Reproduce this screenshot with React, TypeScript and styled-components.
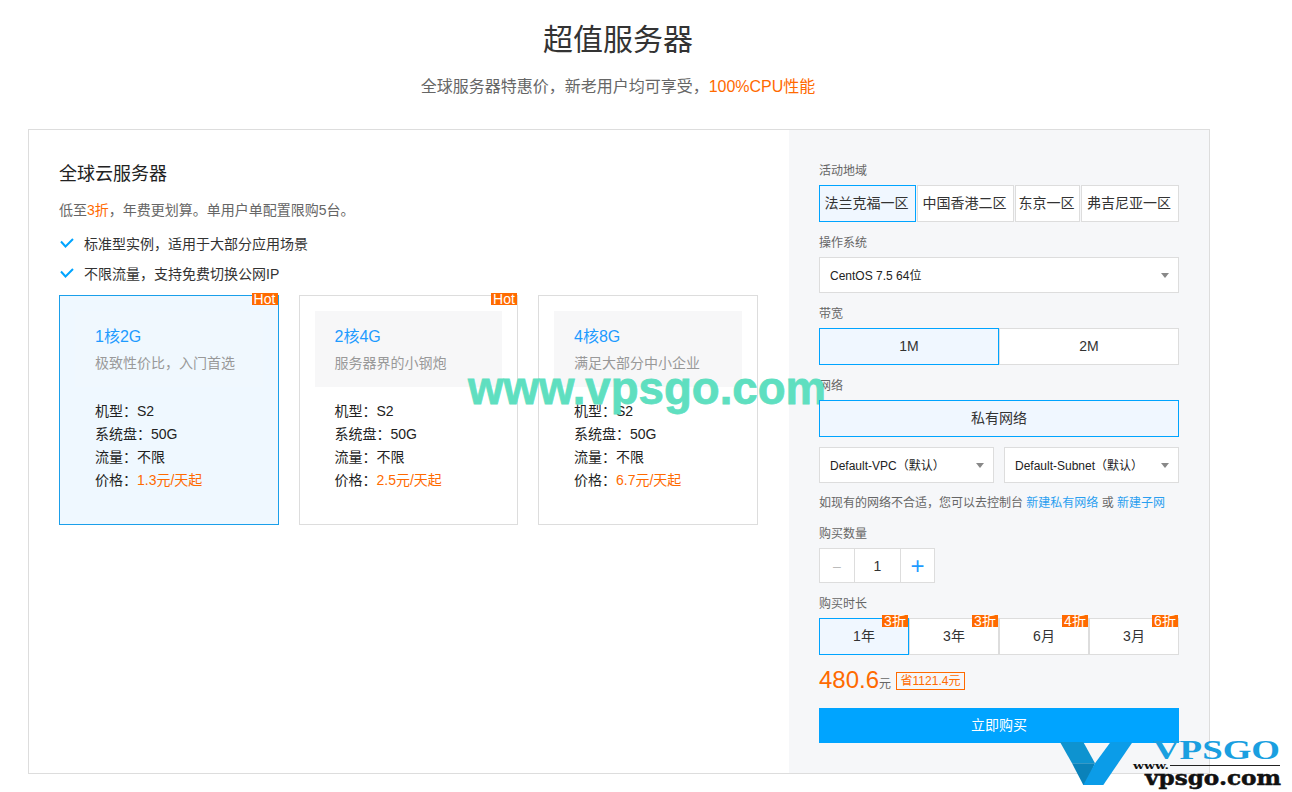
import React from 'react';
import styled, { createGlobalStyle } from 'styled-components';

const Global = createGlobalStyle`
  html, body { margin: 0; padding: 0; background: #fff; }
  body { font-family: "Liberation Sans", "Noto Sans CJK SC", sans-serif; color: #333; }
  * { box-sizing: border-box; }
`;

const Page = styled.div`
  position: relative;
  width: 1292px;
  height: 792px;
  overflow: hidden;
  padding-left: 28px;
`;
const Head = styled.header`
  width: 1180px;
  height: 129px;
  padding-top: 20px;
  text-align: center;
`;
const Title = styled.h1`
  margin: 0;
  font-size: 30px;
  line-height: 40px;
  font-weight: 400;
  color: #333;
`;
const Sub = styled.p`
  margin: 16px 0 0;
  font-size: 16px;
  line-height: 22px;
  color: #666;
`;
const Orange = styled.span`
  color: #ff6a00;
`;
const Panel = styled.section`
  width: 1182px;
  height: 645px;
  border: 1px solid #ddd;
  display: flex;
`;
const Left = styled.div`
  width: 760px;
  padding: 32px 0 0 30px;
`;
const PlanTitle = styled.h2`
  margin: 0;
  font-size: 18px;
  line-height: 24px;
  font-weight: 400;
  color: #222;
`;
const Desc = styled.p`
  margin: 14px 0 0;
  font-size: 14px;
  line-height: 20px;
  color: #666;
`;
const Features = styled.ul`
  list-style: none;
  margin: 8px 0 0;
  padding: 0;
`;
const Feature = styled.li`
  display: flex;
  align-items: center;
  gap: 9px;
  height: 30px;
  font-size: 14px;
  color: #333;
`;
const Cards = styled.div`
  display: flex;
  gap: 20px;
  margin-top: 7px;
`;
const Card = styled.article<{ $active?: boolean }>`
  position: relative;
  width: 219.5px;
  height: 230px;
  padding: 15px;
  border: 1px solid ${p => (p.$active ? '#1a9fea' : '#ddd')};
  background: ${p => (p.$active ? '#eff8ff' : '#fff')};
`;
const HotTag = styled.span`
  position: absolute;
  top: -3px;
  right: 0;
  width: 26px;
  height: 12px;
  background: #ff6a00;
  color: #fff;
  font-size: 14px;
  line-height: 12px;
  text-align: center;
`;
const CardInner = styled.div<{ $active?: boolean }>`
  height: 76px;
  padding: 15px 20px 0;
  background: ${p => (p.$active ? '#f0f8fe' : '#f7f7f8')};
`;
const CardName = styled.div`
  font-size: 16px;
  line-height: 22px;
  color: #1e9bff;
`;
const CardDesc = styled.div`
  margin-top: 5px;
  font-size: 14px;
  line-height: 20px;
  color: #999;
`;
const Specs = styled.div`
  margin-top: 13px;
  padding-left: 20px;
`;
const Spec = styled.div`
  font-size: 14px;
  line-height: 23px;
  color: #222;
`;
const Right = styled.aside`
  flex: 1;
  padding: 20px 30px 0 30px;
  background: #f6f7f9;
`;
const Label = styled.div`
  height: 35px;
  padding-top: 13px;
  font-size: 12px;
  line-height: 16px;
  color: #666;
`;
const Opt = styled.button<{ $active?: boolean }>`
  position: relative;
  display: block;
  height: 37px;
  padding: 0 0 3px;
  font: inherit;
  font-size: 14px;
  white-space: nowrap;
  color: #333;
  text-align: center;
  border: 1px solid ${p => (p.$active ? '#00a4ff' : '#ddd')};
  background: ${p => (p.$active ? '#f0f7ff' : '#fff')};
  z-index: ${p => (p.$active ? 1 : 0)};
`;
const RegionRow = styled.div`
  display: grid;
  grid-template-columns: 97px 97px 65px 98px;
  gap: 1px;
  ${Opt} {
    padding-right: 2px;
  }
`;
const TwoRow = styled.div`
  display: grid;
  grid-template-columns: 1fr 1fr;
  ${Opt} {
    padding-bottom: 1px;
  }
`;
const OneRow = styled.div`
  display: grid;
`;
const DurRow = styled.div`
  display: grid;
  grid-template-columns: repeat(4, 90px);
`;
const DiscountTag = styled.span`
  position: absolute;
  top: -4px;
  right: 0;
  width: 26px;
  height: 12px;
  background: #ff6a00;
  color: #fff;
  font-size: 14px;
  line-height: 12px;
  text-align: center;
`;
const SelectBox = styled.div`
  position: relative;
  height: 36px;
  padding-left: 10px;
  font-size: 12px;
  line-height: 36px;
  color: #222;
  background: #fff;
  border: 1px solid #ddd;
  &::after {
    content: '';
    position: absolute;
    right: 9px;
    top: 15px;
    border-left: 4px solid transparent;
    border-right: 4px solid transparent;
    border-top: 5px solid #888;
  }
`;
const NetSelects = styled.div`
  display: grid;
  grid-template-columns: 175px 175px;
  gap: 10px;
  margin-top: 10px;
`;
const Hint = styled.p`
  margin: 0;
  height: 30px;
  padding-top: 12px;
  font-size: 12px;
  line-height: 16px;
  color: #666;
  white-space: nowrap;
`;
const Link = styled.a`
  color: #2a9ff0;
`;
const Stepper = styled.div`
  display: grid;
  grid-template-columns: 34px 47px 33px;
  width: 116px;
  height: 35px;
  background: #fff;
  border: 1px solid #ddd;
`;
const StepCell = styled.span<{ $mid?: boolean; $color: string; $size: number }>`
  display: flex;
  align-items: center;
  justify-content: center;
  font-size: ${p => p.$size}px;
  color: ${p => p.$color};
  ${p => (p.$mid ? 'border-left: 1px solid #ddd; border-right: 1px solid #ddd;' : '')}
`;
const PriceRow = styled.div`
  display: flex;
  align-items: baseline;
  height: 53px;
  padding-top: 11px;
`;
const Price = styled.span`
  font-size: 24px;
  line-height: 28px;
  color: #ff6a00;
`;
const Unit = styled.span`
  font-size: 12px;
  color: #666;
`;
const Save = styled.span`
  align-self: flex-start;
  margin: 6px 0 0 5px;
  padding: 0 3.5px;
  height: 18px;
  line-height: 16px;
  font-size: 12px;
  color: #ff6a00;
  border: 1px solid #ff6a00;
`;
const Buy = styled.button`
  display: block;
  width: 360px;
  height: 35px;
  padding: 0 0 3px;
  border: 0;
  font: inherit;
  font-size: 14px;
  color: #fff;
  background: #00a4ff;
`;
const Watermark = styled.div`
  position: absolute;
  left: 468px;
  top: 363px;
  font-size: 45.6px;
  line-height: 52px;
  font-weight: 700;
  white-space: nowrap;
  color: #5fdfc0;
  -webkit-text-stroke: 0.8px #5fdfc0;
`;
const Logo = styled.svg`
  position: absolute;
  left: 1060px;
  top: 736px;
`;

const Check = () => (
  <svg width="16" height="16" viewBox="0 0 16 16" fill="none">
    <path d="M2 6.5L6.5 11.5L14 4" stroke="#00a4ff" strokeWidth="2" />
  </svg>
);

const plans = [
  { name: '1核2G', desc: '极致性价比，入门首选', price: '1.3元/天起', active: true, hot: true },
  { name: '2核4G', desc: '服务器界的小钢炮', price: '2.5元/天起', hot: true },
  { name: '4核8G', desc: '满足大部分中小企业', price: '6.7元/天起' },
];

export default function App() {
  return (
    <Page>
      <Global />
      <Head>
        <Title>超值服务器</Title>
        <Sub>全球服务器特惠价，新老用户均可享受，<Orange>100%CPU性能</Orange></Sub>
      </Head>
      <Panel>
        <Left>
          <PlanTitle>全球云服务器</PlanTitle>
          <Desc>低至<Orange>3折</Orange>，年费更划算。单用户单配置限购5台。</Desc>
          <Features>
            <Feature><Check />标准型实例，适用于大部分应用场景</Feature>
            <Feature><Check />不限流量，支持免费切换公网IP</Feature>
          </Features>
          <Cards>
            {plans.map(p => (
              <Card key={p.name} $active={p.active}>
                {p.hot && <HotTag>Hot</HotTag>}
                <CardInner $active={p.active}>
                  <CardName>{p.name}</CardName>
                  <CardDesc>{p.desc}</CardDesc>
                </CardInner>
                <Specs>
                  <Spec>机型：S2</Spec>
                  <Spec>系统盘：50G</Spec>
                  <Spec>流量：不限</Spec>
                  <Spec>价格：<Orange>{p.price}</Orange></Spec>
                </Specs>
              </Card>
            ))}
          </Cards>
        </Left>
        <Right>
          <Label>活动地域</Label>
          <RegionRow>
            <Opt $active>法兰克福一区</Opt>
            <Opt>中国香港二区</Opt>
            <Opt>东京一区</Opt>
            <Opt>弗吉尼亚一区</Opt>
          </RegionRow>
          <Label>操作系统</Label>
          <SelectBox>CentOS 7.5 64位</SelectBox>
          <Label>带宽</Label>
          <TwoRow>
            <Opt $active>1M</Opt>
            <Opt>2M</Opt>
          </TwoRow>
          <Label>网络</Label>
          <OneRow>
            <Opt $active>私有网络</Opt>
          </OneRow>
          <NetSelects>
            <SelectBox>Default-VPC（默认）</SelectBox>
            <SelectBox>Default-Subnet（默认）</SelectBox>
          </NetSelects>
          <Hint>如现有的网络不合适，您可以去控制台 <Link>新建私有网络</Link> 或 <Link>新建子网</Link></Hint>
          <Label>购买数量</Label>
          <Stepper>
            <StepCell $color="#bbb" $size={14}>–</StepCell>
            <StepCell $mid $color="#333" $size={14}>1</StepCell>
            <StepCell $color="#1e9bff" $size={24}>+</StepCell>
          </Stepper>
          <Label>购买时长</Label>
          <DurRow>
            <Opt $active>1年<DiscountTag>3折</DiscountTag></Opt>
            <Opt>3年<DiscountTag>3折</DiscountTag></Opt>
            <Opt>6月<DiscountTag>4折</DiscountTag></Opt>
            <Opt>3月<DiscountTag>6折</DiscountTag></Opt>
          </DurRow>
          <PriceRow>
            <Price>480.6</Price>
            <Unit>元</Unit>
            <Save>省1121.4元</Save>
          </PriceRow>
          <Buy>立即购买</Buy>
        </Right>
      </Panel>
      <Watermark>www.vpsgo.com</Watermark>
      <Logo width="232" height="56" viewBox="0 0 232 56">
        <polygon points="0,6 23.3,6 35,27.3 12,27.3" fill="#0e93d0" />
        <polygon points="12,27.3 35,27.3 26,49 23.3,49" fill="#0a82ba" />
        <polygon points="50.6,6 72.6,6 43.3,49 23.3,49 35,27.3" fill="#0b9ce8" />
        <text x="93" y="23" fontFamily="Liberation Serif" fontWeight="700" fontSize="27" fill="#1a9fe0" textLength="127" lengthAdjust="spacingAndGlyphs">VPSGO</text>
        <text x="73" y="33" fontFamily="DejaVu Serif" fontWeight="700" fontSize="9" fill="#111" textLength="36" lengthAdjust="spacingAndGlyphs">www.</text>
        <rect x="110" y="29" width="110" height="1" fill="#222" />
        <text x="85" y="49" fontFamily="DejaVu Serif" fontWeight="700" fontSize="20" fill="#111" stroke="#111" strokeWidth="0.5" textLength="136" lengthAdjust="spacingAndGlyphs">vpsgo.com</text>
      </Logo>
    </Page>
  );
}
